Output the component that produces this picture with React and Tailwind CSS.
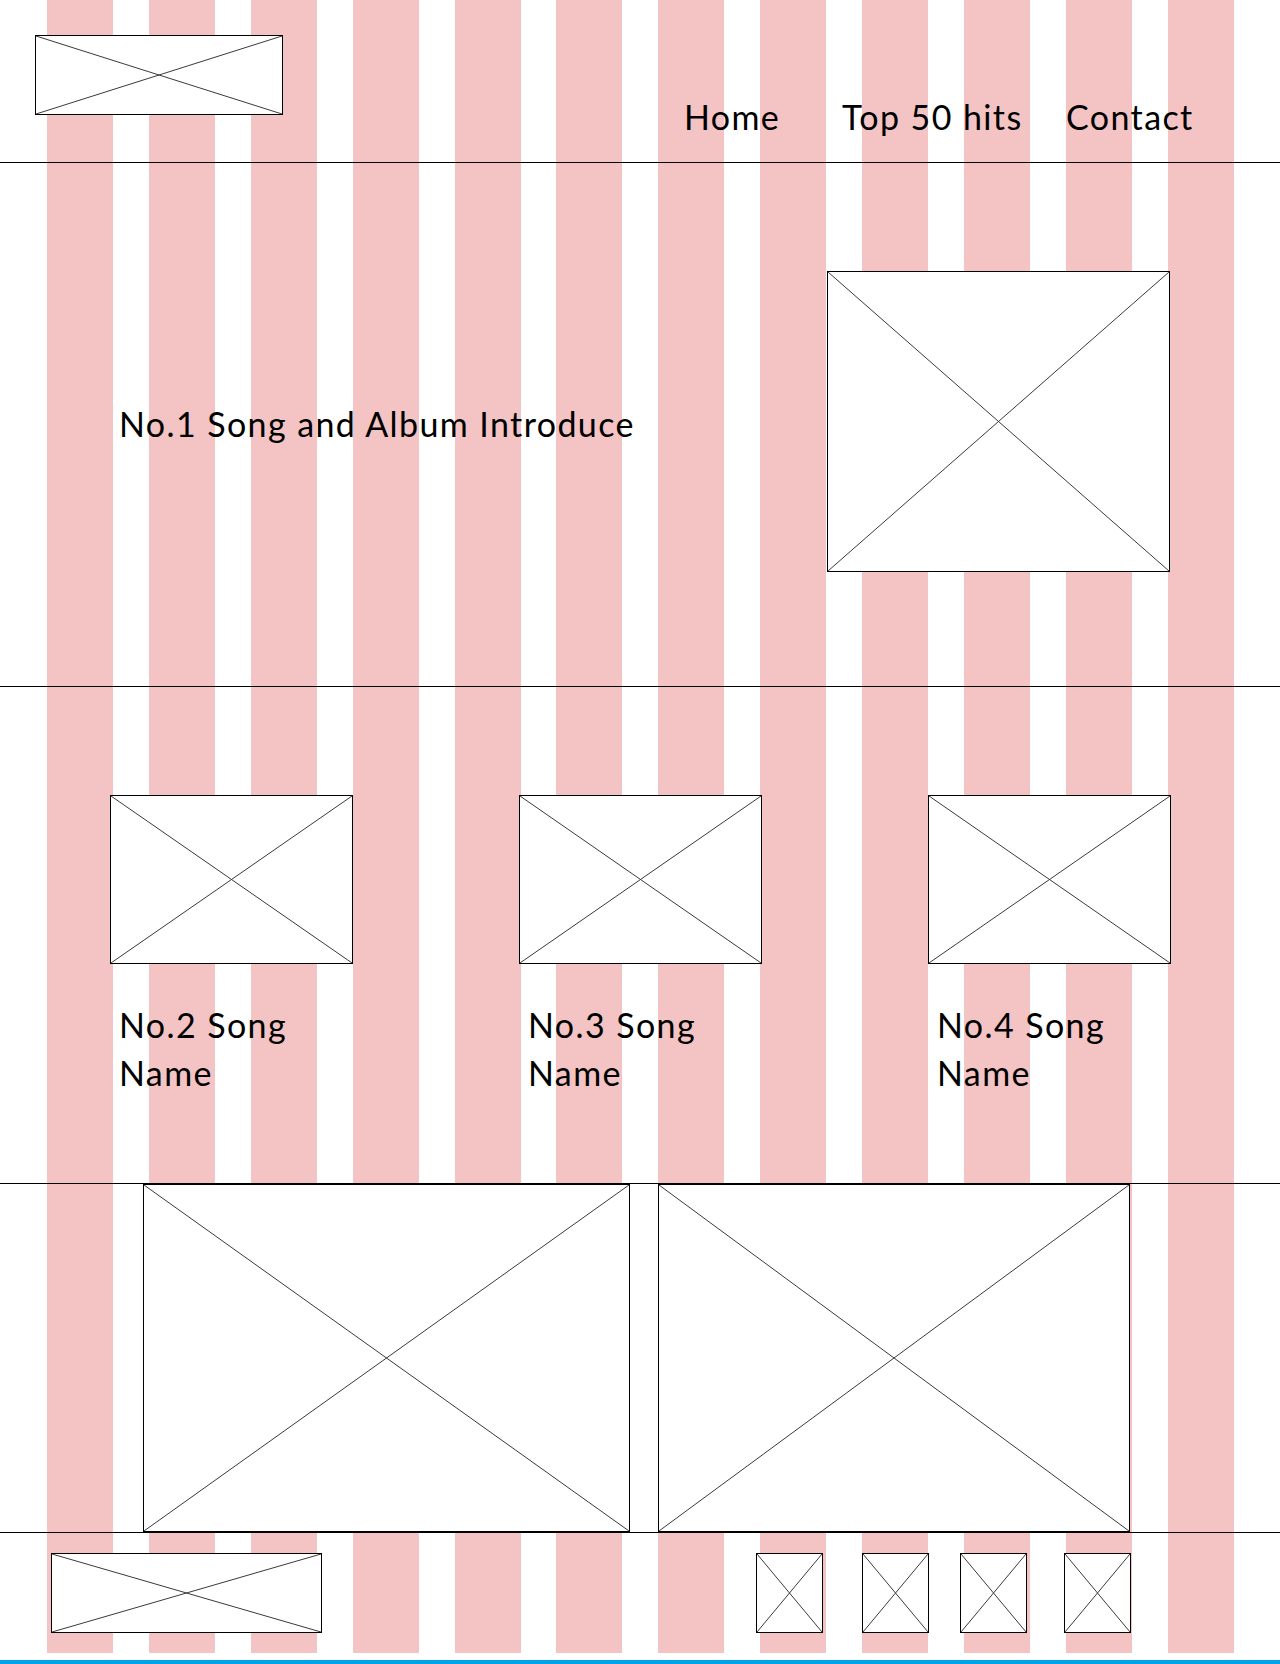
import React from "react";

const Ph = ({ className = "" }) => (
  <div className={"shrink-0 border border-black bg-white " + className}>
    <svg className="block w-full h-full" viewBox="0 0 100 100" preserveAspectRatio="none">
      <line x1="0" y1="0" x2="100" y2="100" stroke="#3a3a3a" strokeWidth="1" vectorEffect="non-scaling-stroke" />
      <line x1="100" y1="0" x2="0" y2="100" stroke="#3a3a3a" strokeWidth="1" vectorEffect="non-scaling-stroke" />
    </svg>
  </div>
);

const cols = Array.from({ length: 12 });

const cards = ["No.2 Song Name", "No.3 Song Name", "No.4 Song Name"];

export default function App() {
  return (
    <div className="relative w-[1280px] h-[1664px] bg-white text-black font-['Lato',sans-serif] overflow-hidden">
      {/* background column grid */}
      <div className="absolute left-0 top-0 w-full h-[1653px] flex pl-[47px] gap-[35.9px]">
        {cols.map((_, i) => (
          <div key={i} className="w-[66px] h-full shrink-0 bg-[#f4c3c3]" />
        ))}
      </div>

      <div className="relative flex flex-col">
        {/* header */}
        <header className="h-[163px] border-b border-black flex items-start">
          <Ph className="ml-[35px] mt-[35px] w-[248px] h-[80px]" />
          <nav className="ml-[401px] mt-[93px] flex text-[34px] leading-[48px] tracking-[1.4px]">
            <span className="w-[158px]">Home</span>
            <span className="w-[224px]">Top 50 hits</span>
            <span>Contact</span>
          </nav>
        </header>

        {/* hero */}
        <section className="h-[524px] border-b border-black flex items-start pl-[119px]">
          <div className="w-[708px] pt-[237px] text-[34px] leading-[48px] tracking-[1.4px]">
            No.1 Song and Album Introduce
          </div>
          <Ph className="mt-[108px] w-[343px] h-[301px]" />
        </section>

        {/* cards */}
        <section className="h-[497px] border-b border-black flex items-start pl-[110px] gap-[166px] pt-[108px]">
          {cards.map((c) => (
            <div key={c} className="w-[243px] flex flex-col">
              <Ph className="w-[243px] h-[169px]" />
              <div className="mt-[37px] pl-[9px] w-[215px] text-[34px] leading-[48px] tracking-[1.4px]">{c}</div>
            </div>
          ))}
        </section>

        {/* big images */}
        <section className="h-[349px] border-b border-black flex pl-[143px]">
          <Ph className="w-[487px] h-full" />
          <Ph className="ml-[28px] w-[472px] h-full" />
        </section>

        {/* footer */}
        <footer className="h-[127px] flex items-start pt-[20px]">
          <Ph className="ml-[51px] w-[271px] h-[80px]" />
          <Ph className="ml-[434px] w-[67px] h-[80px]" />
          <Ph className="ml-[39px] w-[67px] h-[80px]" />
          <Ph className="ml-[31px] w-[67px] h-[80px]" />
          <Ph className="ml-[37px] w-[67px] h-[80px]" />
        </footer>
        <div className="h-[4px] bg-[#00a2e8]" />
      </div>
    </div>
  );
}
